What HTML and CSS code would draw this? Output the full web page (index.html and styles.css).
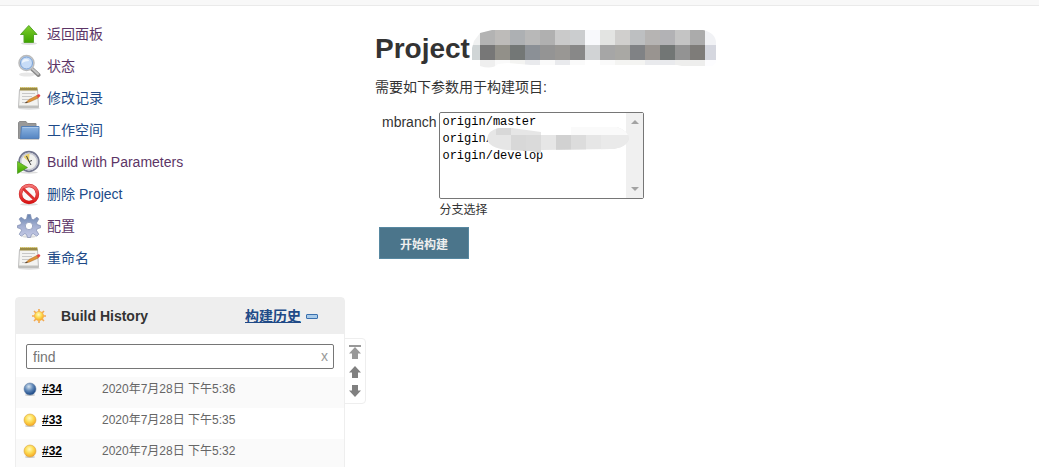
FILE: index.html
```html
<!DOCTYPE html>
<html lang="zh-CN">
<head>
    <meta charset="UTF-8">
    <meta name="viewport" content="width=device-width, initial-scale=1.0">
    <title>Project [Jenkins]</title>
    <link rel="stylesheet" href="styles.css">
</head>
<body>
    <svg class="defs" aria-hidden="true">
        <defs>
            <linearGradient id="green" x1="0" y1="0" x2="0" y2="1"><stop offset="0" stop-color="#7fd02c"/><stop offset="1" stop-color="#3fa300"/></linearGradient>
            <linearGradient id="folder" x1="0" y1="0" x2="0" y2="1"><stop offset="0" stop-color="#8db5e2"/><stop offset="1" stop-color="#5585c2"/></linearGradient>
            <linearGradient id="steel" x1="0" y1="0" x2="0" y2="1"><stop offset="0" stop-color="#6784b0"/><stop offset=".5" stop-color="#a5b0d2"/><stop offset="1" stop-color="#c5cae6"/></linearGradient>
            <linearGradient id="red" x1="0" y1="0" x2="0" y2="1"><stop offset="0" stop-color="#f47474"/><stop offset="1" stop-color="#d91515"/></linearGradient>
            <radialGradient id="yellowball" cx=".45" cy=".35" r=".65"><stop offset="0" stop-color="#fffbc0"/><stop offset=".5" stop-color="#fddc53"/><stop offset="1" stop-color="#f5a623"/></radialGradient>
            <radialGradient id="blueball" cx=".4" cy=".3" r=".7"><stop offset="0" stop-color="#d5e3ef"/><stop offset=".5" stop-color="#6088b8"/><stop offset="1" stop-color="#174482"/></radialGradient>
            <symbol id="notepad" viewBox="0 0 24 24">
                <ellipse cx="12" cy="22.500" rx="11" ry="1.200" fill="#ddd"/>
                <path d="M2.500 3.500H20.500l1 18H1.500z" fill="#f3f3f1" stroke="#bdbdbd"/>
                <path d="M1.500 20.500h20" stroke="#c0c0bd" stroke-width="2"/>
                <path d="M3 3H20.500" stroke="#9a8a45" stroke-width="3"/>
                <path d="M3 1.500H20.500" stroke="#d5c45b" stroke-dasharray="1 1"/>
                <path d="M5 7.500h13M5 10.500h10M5 13.500h7M5 16.500h4" stroke="#c8c8c8"/>
                <path d="M8.500 17l3.500-3.500 8-4 1.300 2.500-8.800 4z" fill="#e0953a" stroke="#a5621a" stroke-width=".5"/>
                <path d="M7.500 17.300l2.500-1.700.7.900z" fill="#333"/>
                <path d="M19.500 9.300l2.500-1.300 1.500 1.700-2 2.300z" fill="#e54646"/>
            </symbol>
            <symbol id="yellow" viewBox="0 0 14 14"><ellipse cx="7" cy="13" rx="5" ry="1" fill="#ccc"/><circle cx="7" cy="7" r="6" fill="url(#yellowball)" stroke="#d9a441" stroke-width=".6"/></symbol>
            <symbol id="arrow" viewBox="0 0 12 12"><path d="M6 0l6 6.500H9V12H3V6.500H0z" fill="currentColor"/></symbol>
        </defs>
    </svg>

    <div class="breadcrumb-bar"></div>
    <div class="page">
        <div class="side-panel">
            <nav class="tasks">
                <a href="#" class="task visited">
                    <svg class="task-icon" viewBox="0 0 24 24"><ellipse cx="12" cy="21.500" rx="8" ry="1.500" fill="#ddd"/><path d="M11.800 3.500L20 12.500H16.500V20.500H7V12.500H3.500z" fill="url(#green)" stroke="#56a52a"/></svg>
                    返回面板
                </a>
                <a href="#" class="task visited">
                    <svg class="task-icon" viewBox="0 0 24 24"><ellipse cx="10" cy="20.500" rx="8" ry="2" fill="#e7e7e7"/><path d="M14.500 14.500L21.500 21" stroke="#888" stroke-width="4" stroke-linecap="round"/><path d="M15 14.500L21 20" stroke="#c4c4c4" stroke-width="2" stroke-linecap="round"/><circle cx="9.500" cy="9" r="7.500" fill="#bdd5f3" stroke="#bbb" stroke-width="1.500"/><circle cx="9.500" cy="9" r="6" fill="#c7dcf7" stroke="#7ba1d3"/><path d="M5 9q0-4 4-4 3 0 3 2-4 0-7 2z" fill="#eef5fc"/></svg>
                    状态
                </a>
                <a href="#" class="task">
                    <svg class="task-icon"><use href="#notepad"/></svg>
                    修改记录
                </a>
                <a href="#" class="task">
                    <svg class="task-icon" viewBox="0 0 24 24"><path d="M1.500 20.500v-16l1-1H9l1.500 2H19v3H5v12z" fill="#999" stroke="#8c8c8c"/><path d="M4.500 8.500h17.500v12H3.500z" fill="url(#folder)" stroke="#5580b8"/><path d="M5.500 9.500h16" stroke="#aac8ea"/><path d="M3 21.500h19" stroke="#ccc"/></svg>
                    工作空间
                </a>
                <a href="#" class="task visited">
                    <svg class="task-icon" viewBox="0 0 24 24"><ellipse cx="12" cy="22.500" rx="9" ry="1.200" fill="#ddd"/><circle cx="12" cy="11.500" r="9.800" fill="#f1f1ee" stroke="#73778f" stroke-width="1.800"/><circle cx="12" cy="11.500" r="8.300" fill="none" stroke="#c3c5d1" stroke-width="1.400"/><path d="M12 12L6.500 7q2-3 6-3.500z" fill="#ead06b"/><path d="M9.500 6l2.500 5.500M12 11.500l3-1M12 11.500l2 3.500" fill="none" stroke="#444"/><path d="M.5 11.500L10.500 17.500 .5 23.500z" fill="url(#green)" stroke="#398f13" stroke-width=".6"/></svg>
                    Build with Parameters
                </a>
                <a href="#" class="task">
                    <svg class="task-icon" viewBox="0 0 24 24"><ellipse cx="12" cy="22.300" rx="9" ry="1.300" fill="#ddd"/><circle cx="12" cy="12" r="8.500" fill="#fafafa" stroke="#c92020" stroke-width="3.400"/><circle cx="12" cy="12" r="8.500" fill="none" stroke="url(#red)" stroke-width="2.600"/><path d="M6 6.500l12 11.500" stroke="#dc3030" stroke-width="2.800"/></svg>
                    删除 Project
                </a>
                <a href="#" class="task visited">
                    <svg class="task-icon" viewBox="0 0 24 24"><ellipse cx="12" cy="22.500" rx="7" ry="1.300" fill="#ddd"/><path fill-rule="evenodd" d="M10.500.5h3l1 4.500 1.800.8 3.700-2.600 1.800 1.900-2.300 3.800.8 1.700 3.200 1v2.200l-3.300 1-.7 1.700 2.300 3.700-2 2-3.600-2.500-1.700.8-1 3h-3l-1-3-1.700-.8-3.600 2.500-2-2 2.300-3.700-.7-1.700-3.300-1v-2.200l3.200-1 .8-1.700L2.200 5.100 4 3.200l3.700 2.600L9.500 5zM12 8.300a3.700 3.700 0 1 0 0 7.400 3.700 3.700 0 1 0 0-7.400z" fill="url(#steel)" stroke="#7f8cb0" stroke-width=".7"/></svg>
                    配置
                </a>
                <a href="#" class="task">
                    <svg class="task-icon"><use href="#notepad"/></svg>
                    重命名
                </a>
            </nav>

            <section class="history">
                <div class="history-header">
                    <svg class="sun" viewBox="0 0 16 16"><path d="M8 1v14M1 8h14M3 3l10 10M13 3L3 13" stroke="#f3a84e" stroke-width="1.600"/><circle cx="8" cy="8" r="4.600" fill="url(#yellowball)" stroke="#f5b250" stroke-width=".8"/></svg>
                    <span class="history-title">Build History</span>
                    <a href="#" class="trend">构建历史</a>
                    <a href="#" class="collapse" aria-label="collapse"><svg class="minus" viewBox="0 0 12 5"><rect x=".5" y=".5" width="11" height="4" rx=".5" fill="#a9cbe9" stroke="#3a70ae"/></svg></a>
                </div>
                <div class="search">
                    <input type="text" class="search-input" placeholder="find" aria-label="find">
                    <button type="button" class="clear" aria-label="clear">x</button>
                </div>
                <table class="builds">
                    <tr>
                        <td class="build-name"><div class="build-link"><svg class="ball" viewBox="0 0 14 14"><ellipse cx="7" cy="13" rx="5" ry="1" fill="#ccc"/><circle cx="7" cy="7" r="6" fill="url(#blueball)" stroke="#6681a4" stroke-width=".6"/></svg><a href="#">#34</a></div></td>
                        <td class="build-date">2020年7月28日 下午5:36</td>
                    </tr>
                    <tr>
                        <td class="build-name"><div class="build-link"><svg class="ball"><use href="#yellow"/></svg><a href="#">#33</a></div></td>
                        <td class="build-date">2020年7月28日 下午5:35</td>
                    </tr>
                    <tr>
                        <td class="build-name"><div class="build-link"><svg class="ball"><use href="#yellow"/></svg><a href="#">#32</a></div></td>
                        <td class="build-date">2020年7月28日 下午5:32</td>
                    </tr>
                </table>
                <div class="pager">
                    <a href="#" class="light" aria-label="newest"><svg class="pager-top" viewBox="0 0 12 14"><path d="M0 0h12v2H0zM6 2l6 6.500H9V14H3V8.500H0z" fill="currentColor"/></svg></a>
                    <a href="#" aria-label="newer"><svg class="pager-icon"><use href="#arrow"/></svg></a>
                    <a href="#" aria-label="older"><svg class="pager-icon down"><use href="#arrow"/></svg></a>
                </div>
            </section>
        </div>

        <main class="main-panel">
            <h1>Project
                <svg class="masked-title" viewBox="0 0 244 40" aria-hidden="true">
                    <clipPath id="title-clip"><path d="M0 19L2 12 8 4 20 1H231Q244 4 244 14V33Q243 38 232 38H215L205 36H160L70 37 35 34 26 35Q20 41 8 37V31H0z"/></clipPath>
                    <g clip-path="url(#title-clip)" shape-rendering="crispEdges">
                        <path d="M0 1h8v15H0z" fill="#f0f1f1"/><path d="M0 16h8v15H0z" fill="#d0d5d6"/>
                        <path d="M8 1h15v15H8z" fill="#b3b3b3"/><path d="M8 16h15v15H8z" fill="#777777"/>
                        <path d="M23 1h15v15H23z" fill="#bdbbb9"/><path d="M23 16h15v15H23z" fill="#929089"/>
                        <path d="M38 1h15v15H38z" fill="#adb0b3"/><path d="M38 16h15v15H38z" fill="#737776"/>
                        <path d="M53 1h15v15H53z" fill="#b8b8b8"/><path d="M53 16h15v15H53z" fill="#8b9096"/>
                        <path d="M68 1h15v15H68z" fill="#b0b0b0"/><path d="M68 16h15v15H68z" fill="#949494"/>
                        <path d="M83 1h15v15H83z" fill="#cacaca"/><path d="M83 16h15v15H83z" fill="#999794"/>
                        <path d="M98 1h15v15H98z" fill="#cbcdcf"/><path d="M98 16h15v15H98z" fill="#888888"/>
                        <path d="M113 1h15v15h-15z" fill="#f8f9fc"/><path d="M113 16h15v15h-15z" fill="#d1d3d5"/>
                        <path d="M128 1h15v15h-15z" fill="#e3e4e2"/><path d="M128 16h15v15h-15z" fill="#a6a6a6"/>
                        <path d="M143 1h15v15h-15z" fill="#d0cfcd"/><path d="M143 16h15v15h-15z" fill="#a9a8a4"/>
                        <path d="M158 1h15v15h-15z" fill="#bdbfc1"/><path d="M158 16h15v15h-15z" fill="#808285"/>
                        <path d="M173 1h15v15h-15z" fill="#b6b4b3"/><path d="M173 16h15v15h-15z" fill="#999490"/>
                        <path d="M188 1h15v15h-15z" fill="#b2b2b5"/><path d="M188 16h15v15h-15z" fill="#727675"/>
                        <path d="M203 1h15v15h-15z" fill="#c4c4c4"/><path d="M203 16h15v15h-15z" fill="#939393"/>
                        <path d="M218 1h15v15h-15z" fill="#ababab"/><path d="M218 16h15v15h-15z" fill="#7e7c79"/>
                        <path d="M233 1h15v15h-15z" fill="#f1f2f5"/><path d="M233 16h15v15h-15z" fill="#d5d7df"/>
                        <path d="M8 31h15v9H8z" fill="#efefef"/><path d="M23 31h15v9H23zM68 31h15v5H68zM98 31h15v5H98zM128 31h15v5h-15z" fill="#fafafa"/>
                        <path d="M38 31h15v5H38zM143 31h30v5h-30z" fill="#f4f4f2"/><path d="M53 31h15v5H53zM83 31h15v5H83zM173 31h30v5h-30z" fill="#e9eaed"/>
                        <path d="M203 31h30v6h-30z" fill="#eeeeed"/><path d="M233 31h11v6h-11z" fill="#fdfdff"/>
                    </g>
                </svg>
            </h1>
            <p class="intro">需要如下参数用于构建项目:</p>
            <form class="params">
                <div class="param">
                    <label for="mbranch" class="param-name">mbranch</label>
                    <div class="param-value">
                        <div class="branch-box">
                            <select id="mbranch" class="branch-list" size="5">
                                <option>origin/master</option>
                                <option>origin/</option>
                                <option>origin/develop</option>
                            </select>
                            <div class="scrollbar" aria-hidden="true">
                                <svg class="scroll-arrow" viewBox="0 0 8 4"><path d="M4 0l4 4H0z" fill="#a3a3a3"/></svg>
                                <svg class="scroll-arrow" viewBox="0 0 8 4"><path d="M0 0h8L4 4z" fill="#a3a3a3"/></svg>
                            </div>
                            <svg class="masked-branch" viewBox="0 0 142 26" aria-hidden="true">
                                <clipPath id="branch-clip"><path d="M0 12Q1 3 12 1H25L54 5V8H84V0H130Q142 4 142 12 139 21 124 22L54 23V26L44 24 20 23Q2 21 0 12z"/></clipPath>
                                <g clip-path="url(#branch-clip)" shape-rendering="crispEdges">
                                    <path d="M0 0h142v26H0z" fill="#e6e6e6"/>
                                    <path d="M9 0h15v8H9zM24 8h15v18H24z" fill="#d8d8d8"/>
                                    <path d="M39 8h15v18H39z" fill="#dadada"/>
                                    <path d="M69 8h15v18H69z" fill="#d1d1d1"/>
                                    <path d="M84 8h15v18H84z" fill="#dcdcdc"/>
                                    <path d="M54 0h88v8H54z" fill="#fafafa"/>
                                    <path d="M114 8h28v18h-28z" fill="#eaeaea"/>
                                </g>
                            </svg>
                        </div>
                        <div class="description">分支选择</div>
                    </div>
                </div>
                <button type="button" class="submit">开始构建</button>
            </form>
        </main>
    </div>
</body>
</html>
```

FILE: styles.css
```css
* {
    box-sizing: border-box;
}
body {
    margin: 0;
    background: #fff;
    color: #333;
    font-family: "Liberation Sans", "Noto Sans CJK SC", sans-serif;
    font-size: 14px;
    line-height: 20px;
}
svg {
    display: block;
    flex: none;
}
.defs {
    position: absolute;
    width: 0;
    height: 0;
}
a {
    color: #204a87;
}
.breadcrumb-bar {
    height: 6px;
    background: #f8f8f8;
    border-bottom: 1px solid #eaeaea;
}
.page {
    display: flex;
    gap: 30px;
    padding: 12px 15px 0;
}

/* side panel */
.side-panel {
    flex: none;
    width: 330px;
}
.task {
    display: flex;
    align-items: center;
    gap: 6px;
    height: 32px;
    padding-left: 2px;
    text-decoration: none;
}
.task.visited {
    color: #5c3566;
}
.task-icon {
    width: 24px;
    height: 24px;
}
.history {
    position: relative;
    margin-top: 23px;
    border: 1px solid #eee;
    border-radius: 4px 4px 0 0;
}
.history-header {
    display: flex;
    align-items: center;
    height: 36px;
    padding: 0 26px 0 15px;
    background: #eee;
    font-weight: bold;
}
.sun {
    width: 16px;
    height: 16px;
    margin-right: 14px;
}
.history-title {
    flex: 1;
}
.collapse {
    padding-left: 5px;
}
.minus {
    width: 12px;
    height: 5px;
}
.search {
    position: relative;
    padding: 10px 10px 8px;
}
.search-input {
    display: block;
    width: 100%;
    height: 25px;
    padding: 0 24px 0 6px;
    border: 1px solid #767676;
    border-radius: 2px;
    font: inherit;
}
.search-input::placeholder {
    color: #757575;
}
.clear {
    position: absolute;
    top: 12px;
    right: 12px;
    padding: 0 4px;
    border: 0;
    background: none;
    color: #999;
    font: inherit;
}
.builds {
    width: 100%;
    border-collapse: collapse;
    table-layout: fixed;
    font-size: 12px;
}
.builds tr {
    height: 31px;
}
.builds tr:nth-child(odd) {
    background: #fafafa;
}
.builds td {
    padding: 0 0 7px;
}
.builds .build-name {
    width: 86px;
    padding-left: 7px;
}
.build-link {
    display: flex;
    align-items: center;
    gap: 5px;
}
.build-link a {
    color: #000;
    font-weight: bold;
}
.ball {
    width: 14px;
    height: 14px;
}
.build-date {
    color: #666;
}
.pager {
    position: absolute;
    top: 40px;
    left: 100%;
    display: flex;
    flex-direction: column;
    align-items: center;
    gap: 7px;
    width: 22px;
    padding: 6px 0;
    border: 1px solid #eee;
    border-radius: 0 4px 4px 0;
}
.pager a {
    color: #808080;
}
.pager .light {
    color: #999;
}
.pager-top {
    width: 12px;
    height: 14px;
}
.pager-icon {
    width: 12px;
    height: 12px;
}
.down {
    transform: rotate(180deg);
}

/* main panel */
.main-panel {
    flex: 1;
    min-width: 0;
    padding-top: 11px;
}
h1 {
    display: flex;
    align-items: center;
    gap: 2px;
    margin: 0;
    font-size: 28px;
    line-height: 40px;
}
.masked-title {
    width: 244px;
    height: 40px;
}
.intro {
    margin: 8px 0 15px;
}
.param {
    display: flex;
    gap: 3px;
    padding-left: 7px;
}
.branch-box {
    position: relative;
    display: flex;
    width: 205px;
    height: 87px;
    border: 1px solid #767676;
    border-radius: 2px;
}
.branch-list {
    flex: 1;
    min-width: 0;
    padding: 1px 0 0;
    border: 0;
    outline: 0;
    overflow: hidden;
    background: #fff;
    color: #000;
    font-family: "Liberation Mono", monospace;
    font-size: 12px;
}
.branch-list option {
    height: 17px;
    min-height: 17px;
    padding: 1px 2px;
    line-height: 15px;
}
.scrollbar {
    display: flex;
    flex-direction: column;
    justify-content: space-between;
    align-items: center;
    width: 17px;
    padding: 7px 0;
    background: #f0f0f0;
}
.scroll-arrow {
    width: 8px;
    height: 4px;
}
.masked-branch {
    position: absolute;
    top: 14px;
    left: 47px;
    width: 142px;
    height: 26px;
}
.description {
    padding-top: 1px;
    font-size: 12px;
}
.submit {
    display: block;
    height: 32px;
    margin: 7px 0 0 4px;
    padding: 0 20px;
    border: 1px solid #5788a1;
    background: #4b758b;
    color: #eee;
    font: bold 12px "Liberation Sans", "Noto Sans CJK SC", sans-serif;
}
```
